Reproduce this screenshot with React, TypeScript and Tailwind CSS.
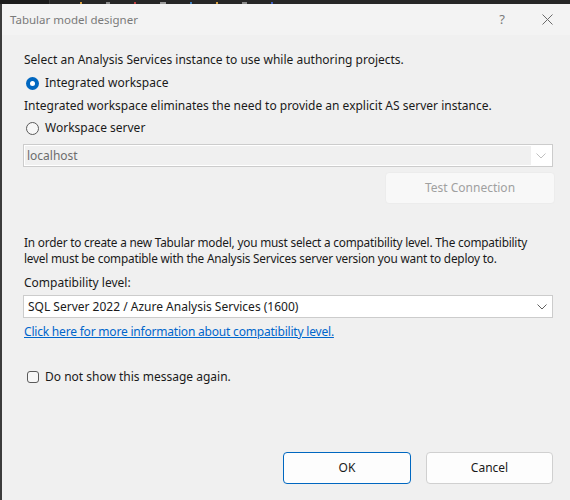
import React from "react";

const font = { fontFamily: "'Noto Sans', 'Open Sans', sans-serif" };

function Chevron({ color }: { color: string }) {
  return (
    <svg width="10" height="6" viewBox="0 0 10 6" fill="none">
      <path d="M0.5 0.5 L5 5 L9.5 0.5" stroke={color} strokeWidth="1" />
    </svg>
  );
}

function Radio({ checked }: { checked: boolean }) {
  if (checked) {
    return (
      <span className="w-[13px] h-[13px] rounded-full bg-[#0067c0] flex items-center justify-center shrink-0">
        <span className="w-[5px] h-[5px] rounded-full bg-white" />
      </span>
    );
  }
  return <span className="w-[13px] h-[13px] rounded-full border border-[#5a5a5a] bg-[#f7f7f7] shrink-0" />;
}

export default function App() {
  return (
    <div className="w-[570px] h-[500px] overflow-hidden bg-[#f0f0f0] flex flex-col text-[12px] text-[#1a1a1a]" style={font}>
      {/* window behind */}
      <div className="h-[4px] flex shrink-0 bg-[#262626]">
        <div className="w-[50px] bg-[#1c1c1c] border-r border-[#3a3a3a]" />
        <div className="flex-1 flex items-end gap-[24px] pl-[30px]">
          <span className="w-[2px] h-[2px] bg-[#d8a040]" />
          <span className="w-[4px] h-[2px] bg-[#8a8a8a]" />
          <span className="w-[2px] h-[2px] bg-[#c04040]" />
          <span className="w-[6px] h-[2px] bg-[#9a9a9a]" />
          <span className="w-[2px] h-[2px] bg-[#4080c0]" />
          <span className="w-[2px] h-[2px] bg-[#d8a040]" />
          <span className="w-[5px] h-[2px] bg-[#8a8a8a]" />
          <span className="w-[2px] h-[2px] bg-[#4060c0]" />
        </div>
      </div>

      <div className="flex-1 flex flex-col border-l-2 border-[#3c3c3c]">
        {/* title bar */}
        <div className="h-[31px] bg-[#f3f3f3] flex items-center pl-[8px] shrink-0">
          <span className="text-[#7a7a7a] text-[11.5px]">Tabular model designer</span>
          <span className="ml-auto text-[#7a7a7a] text-[13px] mr-[37px]">?</span>
          <svg width="11" height="11" viewBox="0 0 11 11" className="mr-[17px]">
            <path d="M0.5 0.5 L10.5 10.5 M10.5 0.5 L0.5 10.5" stroke="#6a6a6a" strokeWidth="1" />
          </svg>
        </div>

        {/* body */}
        <div className="flex-1 flex flex-col pl-[22px] pr-[17px]">
          <div className="h-[16px] leading-[16px] mt-[17px] whitespace-nowrap">
            Select an Analysis Services instance to use while authoring projects.
          </div>
          <label className="h-[16px] mt-[7px] flex items-center gap-[6px] pl-[2px]">
            <Radio checked />
            <span className="leading-[16px]">Integrated workspace</span>
          </label>
          <div className="h-[16px] leading-[16px] mt-[7px] whitespace-nowrap">
            Integrated workspace eliminates the need to provide an explicit AS server instance.
          </div>
          <label className="h-[16px] mt-[6px] flex items-center gap-[6px] pl-[2px]">
            <Radio checked={false} />
            <span className="leading-[16px]">Workspace server</span>
          </label>

          <div className="h-[23px] mt-[8px] border border-[#cccccc] bg-white flex items-stretch p-[1px] -ml-[1px]">
            <div className="flex-1 bg-[#f0f0f0] flex items-center pl-[2px] text-[#6d6d6d]">localhost</div>
            <div className="w-[20px] flex items-center justify-center">
              <Chevron color="#c0c0c0" />
            </div>
          </div>

          <div className="flex justify-end mt-[5px] -mr-[2px]">
            <div className="w-[170px] h-[32px] rounded-[4px] bg-[#f8f8f8] border border-[#ececec] flex items-center justify-center text-[#a0a0a0]">
              Test Connection
            </div>
          </div>

          <p className="leading-[16px] mt-[30px] whitespace-nowrap text-[11.8px] tracking-[-0.2px]">
            In order to create a new Tabular model, you must select a compatibility level. The compatibility
            <br />
            level must be compatible with the Analysis Services server version you want to deploy to.
          </p>
          <div className="h-[16px] leading-[16px] mt-[9px]">Compatibility level:</div>

          <div className="h-[23px] mt-[4px] border border-[#cccccc] bg-white flex items-center -ml-[1px]">
            <span className="flex-1 pl-[4px]">SQL Server 2022 / Azure Analysis Services (1600)</span>
            <div className="w-[20px] flex items-center justify-center">
              <Chevron color="#606060" />
            </div>
          </div>

          <a className="h-[16px] leading-[16px] mt-[6px] text-[#0066cc] underline self-start tracking-[-0.2px]" href="#">
            Click here for more information about compatibility level.
          </a>

          <label className="h-[16px] mt-[29px] flex items-center gap-[6px] pl-[3px]">
            <span className="w-[12px] h-[12px] rounded-[3px] border border-[#5a5a5a] bg-[#f7f7f7] shrink-0" />
            <span className="leading-[16px]">Do not show this message again.</span>
          </label>

          <div className="mt-auto mb-[16px] flex justify-end gap-[15px]">
            <button className="w-[128px] h-[32px] rounded-[4px] bg-[#fdfdfd] border border-[#0067c0] text-[#1a1a1a]">
              OK
            </button>
            <button className="w-[127px] h-[32px] rounded-[4px] bg-[#fdfdfd] border border-[#d0d0d0] text-[#1a1a1a]">
              Cancel
            </button>
          </div>
        </div>
      </div>
    </div>
  );
}
